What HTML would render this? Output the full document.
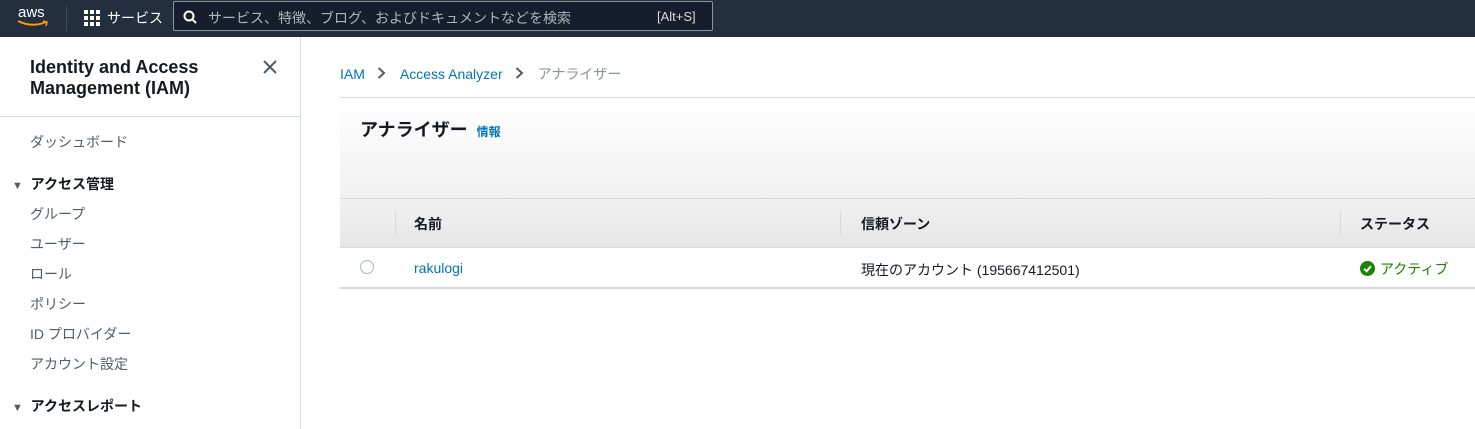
<!DOCTYPE html>
<html><head><meta charset="utf-8"><style>
*{margin:0;padding:0;box-sizing:border-box}
body{width:1475px;height:429px;overflow:hidden;background:#fff;font-family:"Liberation Sans","Noto Sans CJK JP",sans-serif;font-size:14px;color:#545b64;position:relative}
.top{position:absolute;left:0;top:0;width:1475px;height:37px;background:#232f3e;color:#fff}
.abs{position:absolute;white-space:nowrap}
.side{position:absolute;left:0;top:37px;width:301px;height:392px;border-right:1px solid #d5dbdb}
.nav{position:absolute;left:30px;font-size:14px;color:#545b64}
.sec{position:absolute;left:12px;font-size:14px;font-weight:bold;color:#16191f}
a{color:#0073bb;text-decoration:none}
</style></head><body>
<div class="top">
 <div class="abs" style="left:18px;top:4px;font-size:15px;letter-spacing:0">aws</div>
 <svg class="abs" style="left:16px;top:20px" width="34" height="8"><path d="M2 1 Q16 8 30 2" stroke="#ff9900" stroke-width="2" fill="none"/><path d="M27 1 L31 2 L30 6" stroke="#ff9900" stroke-width="1.5" fill="none"/></svg>
 <div class="abs" style="left:66px;top:6px;width:1px;height:25px;background:#3f4b5b"></div>
 <svg class="abs" style="left:84px;top:10px" width="16" height="16" fill="#fff"><rect x="0" y="0" width="4" height="4"/><rect x="6" y="0" width="4" height="4"/><rect x="12" y="0" width="4" height="4"/><rect x="0" y="6" width="4" height="4"/><rect x="6" y="6" width="4" height="4"/><rect x="12" y="6" width="4" height="4"/><rect x="0" y="12" width="4" height="4"/><rect x="6" y="12" width="4" height="4"/><rect x="12" y="12" width="4" height="4"/></svg>
 <div class="abs" style="left:107px;top:8px;font-size:14px">サービス</div>
 <div class="abs" style="left:173px;top:1px;width:540px;height:30px;border:1px solid #879596;border-radius:2px;background:#161e2d"></div>
 <svg class="abs" style="left:183px;top:10px" width="14" height="14"><circle cx="6" cy="6" r="4.5" stroke="#fff" stroke-width="2" fill="none"/><path d="M9.5 9.5 L13 13" stroke="#fff" stroke-width="2"/></svg>
 <div class="abs" style="left:208px;top:8px;font-size:14px;color:#aab7b8">サービス、特徴、ブログ、およびドキュメントなどを検索</div>
 <div class="abs" style="left:657px;top:9px;font-size:13px;color:#d5dbdb">[Alt+S]</div>
</div>
<div class="side">
 <div class="abs" style="left:30px;top:20px;font-size:18px;font-weight:bold;color:#16191f;line-height:21px">Identity and Access<br>Management (IAM)</div>
 <svg class="abs" style="left:263px;top:23px" width="14" height="14"><path d="M1 1L13 13M13 1L1 13" stroke="#545b64" stroke-width="2"/></svg>
 <div class="abs" style="left:0;top:79px;width:300px;height:1px;background:#d5dbdb"></div>
 <div class="nav abs" style="top:95px">ダッシュボード</div>
 <div class="sec abs" style="top:137px"><span style="font-size:11px;color:#545b64">▼</span>&nbsp; アクセス管理</div>
 <div class="nav abs" style="top:167px">グループ</div>
 <div class="nav abs" style="top:197px">ユーザー</div>
 <div class="nav abs" style="top:227px">ロール</div>
 <div class="nav abs" style="top:257px">ポリシー</div>
 <div class="nav abs" style="top:287px">ID プロバイダー</div>
 <div class="nav abs" style="top:317px">アカウント設定</div>
 <div class="sec abs" style="top:359px"><span style="font-size:11px;color:#545b64">▼</span>&nbsp; アクセスレポート</div>
</div>
<div class="abs" style="left:340px;top:64px;font-size:14px"><a>IAM</a><svg style="margin:0 14px 0 12px" width="9" height="12"><path d="M1.5 1L7 6L1.5 11" stroke="#545b64" stroke-width="2" fill="none"/></svg><a>Access Analyzer</a><svg style="margin:0 14px 0 12px" width="9" height="12"><path d="M1.5 1L7 6L1.5 11" stroke="#545b64" stroke-width="2" fill="none"/></svg><span style="color:#879596">アナライザー</span></div>
<div class="abs" style="left:340px;top:97px;width:1135px;height:101px;border-top:1px solid #d5dbdb;background:linear-gradient(#fff,#f1f1f1)"></div>
<div class="abs" style="left:360px;top:116px;font-size:18px;font-weight:bold;color:#16191f">アナライザー <a style="font-size:12px;margin-left:4px">情報</a></div>
<div class="abs" style="left:340px;top:198px;width:1135px;height:50px;border-top:1px solid #d5dbdb;border-bottom:1px solid #d5dbdb;background:linear-gradient(#f1f1f1,#e6e6e6)"></div>
<div class="abs" style="left:395px;top:211px;width:1px;height:24px;background:#d5dbdb"></div>
<div class="abs" style="left:840px;top:211px;width:1px;height:24px;background:#d5dbdb"></div>
<div class="abs" style="left:1340px;top:211px;width:1px;height:24px;background:#d5dbdb"></div>
<div class="abs" style="left:414px;top:214px;font-weight:bold;color:#16191f">名前</div>
<div class="abs" style="left:861px;top:214px;font-weight:bold;color:#16191f">信頼ゾーン</div>
<div class="abs" style="left:1360px;top:214px;font-weight:bold;color:#16191f">ステータス</div>
<div class="abs" style="left:360px;top:260px;width:14px;height:14px;border:1px solid #aab7b8;border-radius:50%"></div>
<div class="abs" style="left:414px;top:260px"><a>rakulogi</a></div>
<div class="abs" style="left:861px;top:260px;color:#16191f">現在のアカウント (195667412501)</div>
<svg class="abs" style="left:1360px;top:261px" width="15" height="15"><circle cx="7.5" cy="7.5" r="7.5" fill="#1d8102"/><path d="M4 7.8L6.6 10.2L11 5.2" stroke="#fff" stroke-width="2" fill="none"/></svg>
<div class="abs" style="left:1380px;top:259px;color:#1d8102">アクティブ</div>
<div class="abs" style="left:340px;top:287px;width:1135px;height:2px;background:#d5dbdb"></div>
</body></html>
